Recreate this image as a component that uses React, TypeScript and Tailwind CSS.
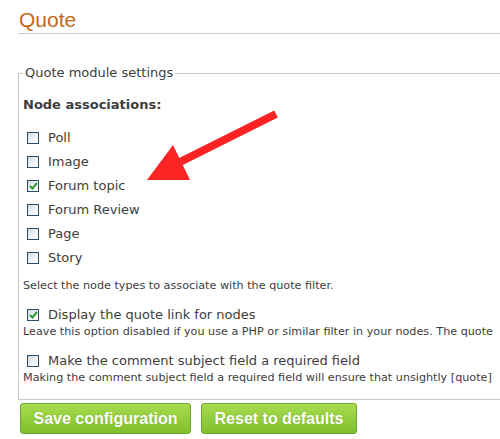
const nodeTypes = [
  { label: 'Poll', checked: false },
  { label: 'Image', checked: false },
  { label: 'Forum topic', checked: true },
  { label: 'Forum Review', checked: false },
  { label: 'Page', checked: false },
  { label: 'Story', checked: false },
];

function Box({ checked }: { checked: boolean }) {
  return (
    <span className="relative flex h-[12px] w-[12px] shrink-0 items-center justify-center border border-[#2b4a63] bg-gradient-to-br from-[#d3d9df] via-[#eef1f4] to-white">
      {checked && (
        <svg width="9" height="8" viewBox="0 0 9 8">
          <path d="M1 4 L3.5 6.5 L8 1" fill="none" stroke="#2f9a2f" strokeWidth="2" />
        </svg>
      )}
    </span>
  );
}

function Btn({ children, width }: { children: string; width: string }) {
  return (
    <button
      className={`h-[31px] ${width} rounded-[3px] border border-[#6ea52e] bg-gradient-to-b from-[#a8dc4f] to-[#7fc02a] text-[16px] font-bold text-white [text-shadow:0_0_1px_rgba(80,120,20,0.5)]`}
      style={{ fontFamily: '"Liberation Sans", Arial, sans-serif' }}
    >
      {children}
    </button>
  );
}

export default function App() {
  return (
    <div
      className="relative h-[439px] w-[500px] overflow-hidden bg-white text-[#3d3d3d]"
      style={{ fontFamily: '"DejaVu Sans", Verdana, sans-serif' }}
    >
      <h2
        className="ml-[18px] w-[600px] border-b border-[#cccccc] pt-[8px] pb-[1px] pl-[1px] text-[21px] leading-[24px] text-[#c0681e]"
        style={{ fontFamily: '"Liberation Sans", Arial, sans-serif' }}
      >
        Quote
      </h2>

      <fieldset className="ml-[18px] mt-[31px] w-[640px] border border-[#c8c8c8] pl-[4px] pb-[14px]">
        <legend className="ml-0 px-[2px] text-[13px] leading-[16px]">Quote module settings</legend>

        <div className="mt-[16px] text-[13px] font-bold leading-[16px]">Node associations:</div>

        <div className="mt-[13px] flex flex-col">
          {nodeTypes.map((t) => (
            <label key={t.label} className="flex h-[24px] items-center gap-[9px] pl-[4px] text-[13px]">
              <Box checked={t.checked} />
              <span>{t.label}</span>
            </label>
          ))}
        </div>

        <div className="mt-[9px] text-[11.2px] leading-[14px]">
          Select the node types to associate with the quote filter.
        </div>

        <label className="mt-[13px] flex h-[18px] items-center gap-[9px] pl-[4px] text-[13px]">
          <Box checked={true} />
          <span>Display the quote link for nodes</span>
        </label>
        <div className="mt-[1px] whitespace-nowrap text-[11.2px] leading-[14px]">
          Leave this option disabled if you use a PHP or similar filter in your nodes. The quote
        </div>

        <label className="mt-[13px] flex h-[18px] items-center gap-[9px] pl-[4px] text-[13px]">
          <Box checked={false} />
          <span>Make the comment subject field a required field</span>
        </label>
        <div className="mt-[1px] whitespace-nowrap text-[11.2px] leading-[14px]">
          Making the comment subject field a required field will ensure that unsightly [quote]
        </div>
      </fieldset>

      <div className="ml-[20px] mt-[3px] flex gap-[10px]">
        <Btn width="w-[171px]">Save configuration</Btn>
        <Btn width="w-[156px]">Reset to defaults</Btn>
      </div>

      <svg className="pointer-events-none absolute left-0 top-0" width="500" height="439" viewBox="0 0 500 439">
        <line x1="276" y1="114" x2="176" y2="164" stroke="#fb2424" strokeWidth="8" />
        <polygon points="147,180 173,145 190,180" fill="#fb2424" />
      </svg>
    </div>
  );
}
